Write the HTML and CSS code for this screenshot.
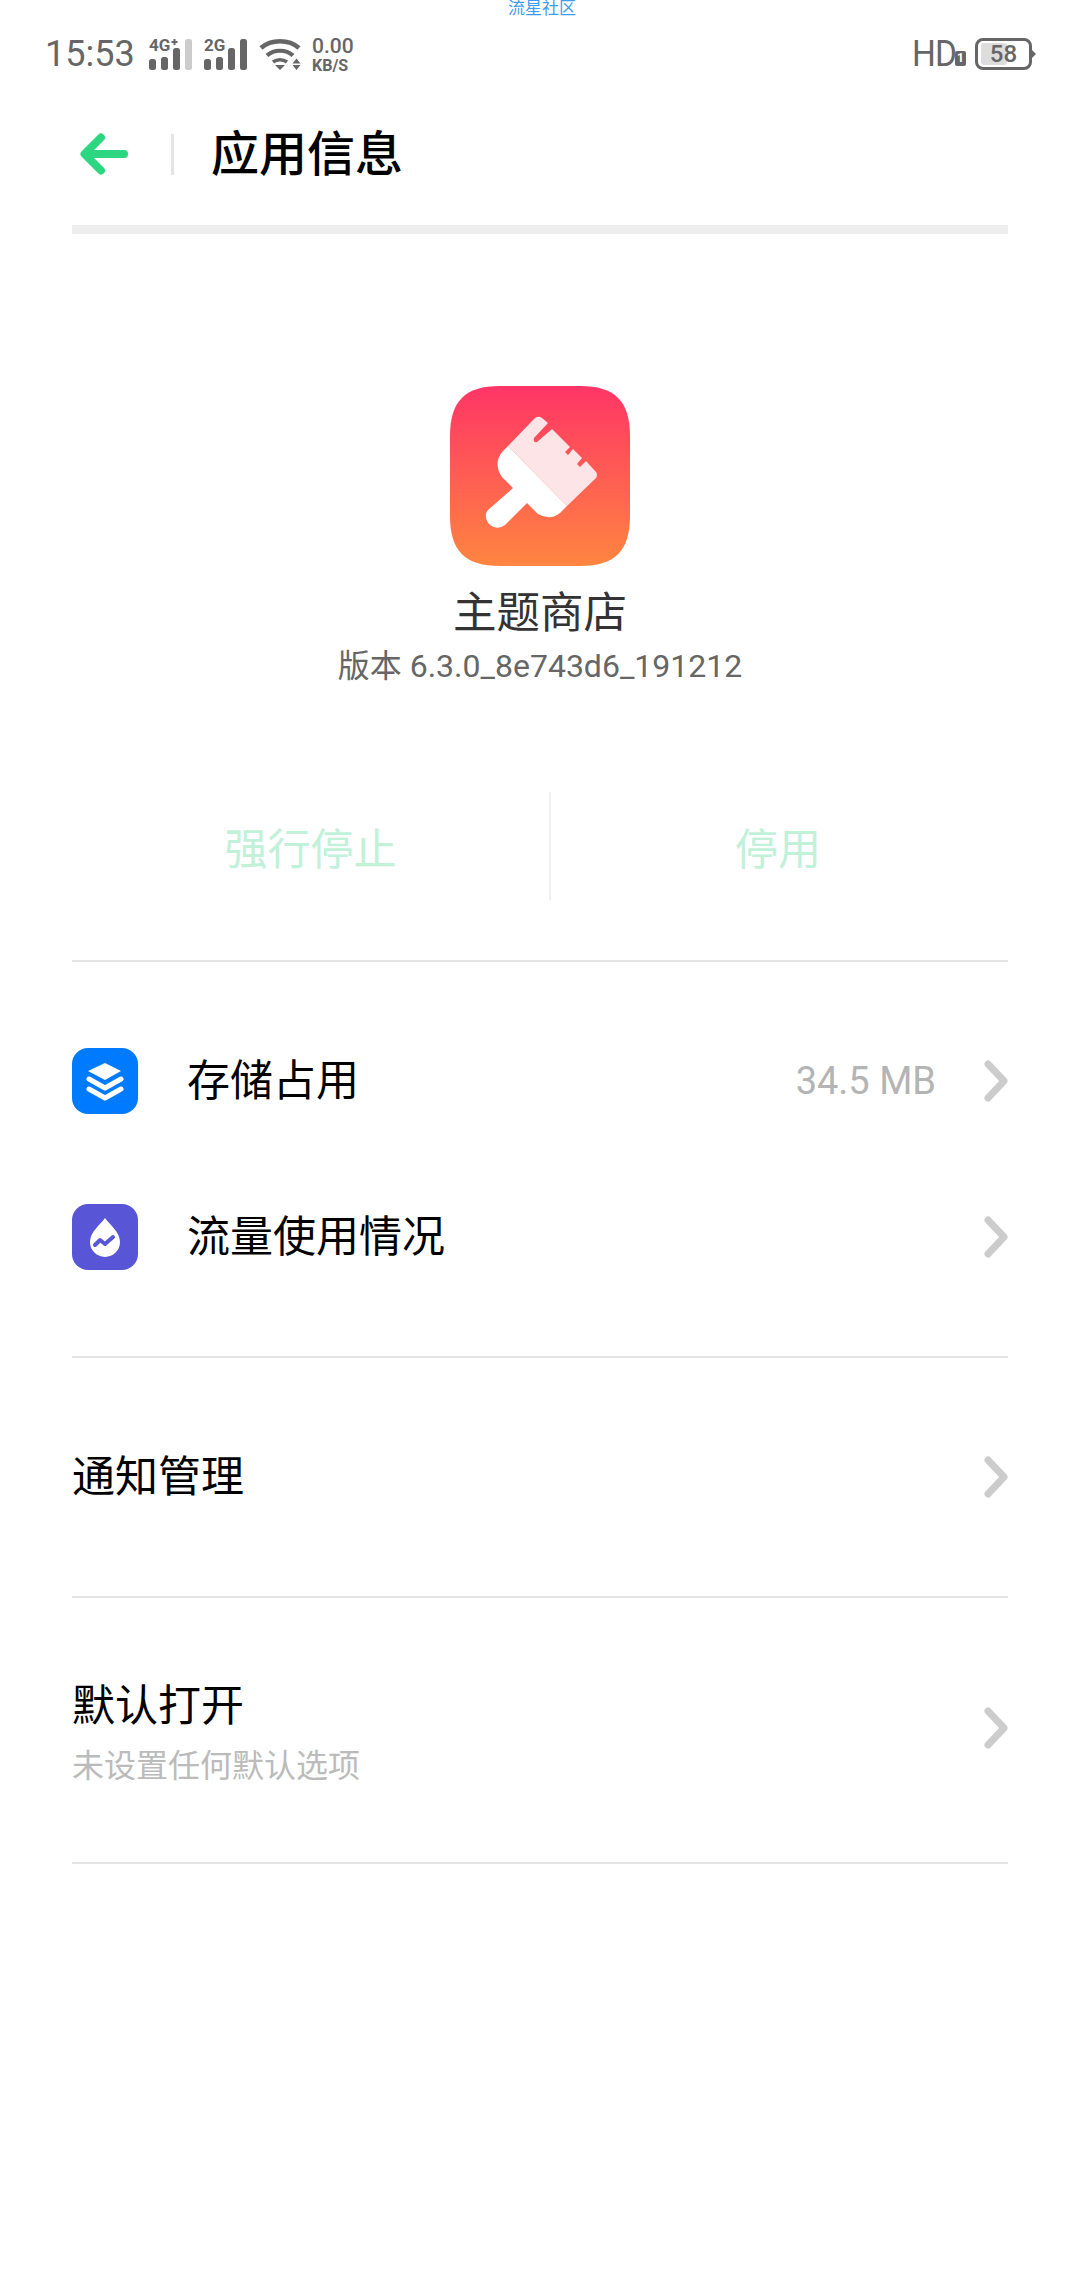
FILE: index.html
```html
<!DOCTYPE html>
<html lang="zh-CN">
<head>
  <meta charset="UTF-8">
  <title>应用信息</title>
  <link rel="stylesheet" href="styles.css">
</head>
<body>
  <div class="carrier-note">流星社区</div>

  <div class="status-bar">
    <span class="time">15:53</span>
    <svg class="signal" width="44" height="35" viewBox="0 -4 44 35" fill="#666">
      <text x="0" y="12" class="net-type">4G</text>
      <rect x="0" y="20" width="7" height="11" rx="2.500"/>
      <rect x="12" y="18" width="7" height="13" rx="2.500"/>
      <rect x="24" y="9" width="7" height="22" rx="2.500"/>
      <rect x="36" y="0" width="7" height="31" rx="2.500" fill="#ccc"/>
      <path d="M25.500 0v6M22.500 3h6" stroke="#666" stroke-width="2"/>
    </svg>
    <svg class="signal" width="44" height="35" viewBox="0 -4 44 35" fill="#666">
      <text x="0" y="12" class="net-type">2G</text>
      <rect x="0" y="20" width="7" height="11" rx="2.500"/>
      <rect x="12" y="18" width="7" height="13" rx="2.500"/>
      <rect x="24" y="9" width="7" height="22" rx="2.500"/>
      <rect x="36" y="0" width="7" height="31" rx="2.500"/>
    </svg>
    <svg class="wifi" width="42" height="33" viewBox="0 0 42 33" fill="none" stroke="#666">
      <path d="M2 10C12 1 30 1 40 10" stroke-width="4.500"/>
      <path d="M8 17.500C15 11 27 11 34 17.500" stroke-width="4"/>
      <path d="M14 24C18 21 24 21 28 24" stroke-width="3.500"/>
      <path d="M16 27h10l-5 5z" fill="#666" stroke="none"/>
      <path d="M37.500 20.500l4 5h-8zM33.500 27h8l-4 5z" fill="#666" stroke="none"/>
    </svg>
    <div class="speed">
      <span class="speed-num">0.00</span>
      <span class="speed-unit">KB/S</span>
    </div>
    <div class="status-right">
      <span class="hd-text">HD</span>
      <span class="hd-sim">1</span>
      <div class="battery">
        <div class="battery-fill"></div>
        <span class="battery-num">58</span>
      </div>
    </div>
  </div>

  <header class="app-bar">
    <svg class="back" width="48" height="42" viewBox="0 0 48 42" fill="none" stroke="#2dd680" stroke-width="8" stroke-linecap="round" stroke-linejoin="round">
      <path d="M44 21H5M21 4.500L4.500 21 21 37.500"/>
    </svg>
    <span class="app-bar-sep"></span>
    <h1 class="app-bar-title">应用信息</h1>
  </header>
  <div class="thick-rule"></div>

  <section class="app-head">
    <svg class="app-icon" width="180" height="180" viewBox="0 0 180 180">
      <defs>
        <linearGradient id="appGrad" x1="0" y1="0" x2="0" y2="1">
          <stop offset="0" stop-color="#ff3566"/>
          <stop offset="1" stop-color="#ff8540"/>
        </linearGradient>
      </defs>
      <path d="M50 0H130C165 0 180 15 180 50V130C180 165 165 180 130 180H50C15 180 0 165 0 130V50C0 15 15 0 50 0Z" fill="url(#appGrad)"/>
      <path d="M58 60L84 33Q88 29 92 32L98 37L84 52Q83 57 87 56L102 43L120 61L115 66L118 69L123 63L132 72L127 78L130 81L136 75L146 86Q148 89 146 92L117 120Z" fill="#fde4e6"/>
      <path d="M58 60L117 120L110 127Q100 135 88 128L77 117L55 139Q47 145 39 138Q33 130 38 124L63 102L52 91Q43 78 52 66Z" fill="#fff"/>
    </svg>
    <div class="app-name">主题商店</div>
    <div class="app-version">版本 6.3.0_8e743d6_191212</div>
  </section>

  <div class="actions">
    <span class="action">强行停止</span>
    <span class="action-sep"></span>
    <span class="action">停用</span>
  </div>

  <section class="group group-icons">
    <div class="row row-icon">
      <svg class="row-glyph" width="66" height="66" viewBox="0 0 66 66">
        <rect width="66" height="66" rx="16" fill="#007aff"/>
        <path d="M33 15L49 23L33 32L16 23Z" fill="#fff"/>
        <path d="M17 31L33 40L49 31M17 41L33 50L49 41" fill="none" stroke="#fff" stroke-width="5" stroke-linecap="round" stroke-linejoin="round"/>
      </svg>
      <span class="row-label">存储占用</span>
      <span class="row-value">34.5 MB</span>
      <svg class="chevron" width="24" height="42" viewBox="0 0 24 42" fill="none" stroke="#ccc" stroke-width="7" stroke-linecap="round" stroke-linejoin="round"><path d="M4 4l16 17L4 38"/></svg>
    </div>
    <div class="row row-icon">
      <svg class="row-glyph" width="66" height="66" viewBox="0 0 66 66">
        <rect width="66" height="66" rx="16" fill="#5856d6"/>
        <path d="M33 14C38 21 48 28 48 38A15 15 0 0 1 18 38C18 28 28 21 33 14Z" fill="#fff"/>
        <path d="M23 41L28 36L33 40L41 33" fill="none" stroke="#5856d6" stroke-width="4" stroke-linecap="round" stroke-linejoin="round"/>
      </svg>
      <span class="row-label">流量使用情况</span>
      <svg class="chevron" width="24" height="42" viewBox="0 0 24 42" fill="none" stroke="#ccc" stroke-width="7" stroke-linecap="round" stroke-linejoin="round"><path d="M4 4l16 17L4 38"/></svg>
    </div>
  </section>

  <section class="group group-plain">
    <div class="row">
      <span class="row-label">通知管理</span>
      <svg class="chevron" width="24" height="42" viewBox="0 0 24 42" fill="none" stroke="#ccc" stroke-width="7" stroke-linecap="round" stroke-linejoin="round"><path d="M4 4l16 17L4 38"/></svg>
    </div>
  </section>

  <section class="group group-sub">
    <div class="row">
      <div class="row-text">
        <span class="row-label">默认打开</span>
        <span class="row-sub">未设置任何默认选项</span>
      </div>
      <svg class="chevron" width="24" height="42" viewBox="0 0 24 42" fill="none" stroke="#ccc" stroke-width="7" stroke-linecap="round" stroke-linejoin="round"><path d="M4 4l16 17L4 38"/></svg>
    </div>
  </section>
</body>
</html>
```

FILE: styles.css
```css
* {
  box-sizing: border-box;
}
body {
  margin: 0;
  width: 1080px;
  height: 2280px;
  overflow: hidden;
  background: #fff;
  color: #000;
  font-family: Roboto, "Noto Sans CJK SC", sans-serif;
}

/* status bar */
.carrier-note {
  height: 16px;
  padding-left: 4px;
  font-size: 17px;
  line-height: 16px;
  text-align: center;
  color: #3f9cf0;
}
.status-bar {
  display: flex;
  align-items: center;
  height: 76px;
  padding: 0 45px;
  color: #666;
}
.time {
  font-size: 36px;
  width: 104px;
}
.signal {
  margin: -4px 11px 0 0;
}
.net-type {
  font: bold 17px Roboto, sans-serif;
}
.wifi {
  margin-right: 11px;
}
.speed {
  display: flex;
  flex-direction: column;
  gap: 1px;
  font-weight: 500;
  line-height: 1;
}
.speed-num {
  font-size: 21px;
  margin-top: 1px;
}
.speed-unit {
  font-size: 16px;
  font-weight: 700;
}
.status-right {
  margin-left: auto;
  margin-right: 3px;
  display: flex;
  align-items: center;
}
.hd-text {
  width: 42px;
  font-size: 36px;
  letter-spacing: -1px;
  transform: scaleX(.93);
  transform-origin: left center;
}
.hd-sim {
  width: 11px;
  height: 15px;
  margin: 8px 9px 0 1px;
  border-radius: 2px;
  background: #666;
  color: #fff;
  font-size: 12px;
  font-weight: 700;
  line-height: 15px;
  text-align: center;
}
.battery {
  position: relative;
  display: flex;
  align-items: center;
  justify-content: center;
  width: 57px;
  height: 32px;
  border: 3px solid #666;
  border-radius: 8px;
}
.battery::after {
  content: "";
  position: absolute;
  right: -7px;
  top: 9px;
  border-left: 4px solid #666;
  border-top: 4px solid transparent;
  border-bottom: 4px solid transparent;
}
.battery-fill {
  position: absolute;
  left: 3px;
  top: 2px;
  bottom: 2px;
  width: 26px;
  background: #ddd;
  border-radius: 3px;
}
.battery-num {
  position: relative;
  font-size: 24px;
  font-weight: 500;
}

/* title bar */
.app-bar {
  display: flex;
  align-items: center;
  height: 124px;
  padding-left: 80px;
}
.app-bar-sep {
  width: 3px;
  height: 41px;
  margin: 0 37px 0 43px;
  background: #e4e4e4;
}
.app-bar-title {
  margin: 0 0 8px;
  font-size: 48px;
  font-weight: 500;
}
.thick-rule {
  height: 9px;
  margin: 9px 72px 0;
  background: #eee;
}

/* app header */
.app-head {
  display: flex;
  flex-direction: column;
  align-items: center;
  padding-top: 152px;
}
.app-name {
  margin-top: 21px;
  font-size: 43.500px;
  line-height: 54px;
  color: #333;
}
.app-version {
  margin-top: 3px;
  font-size: 32px;
  line-height: 44px;
  color: #666;
}

.actions {
  display: grid;
  grid-template-columns: 477px 2px 1fr;
  align-items: center;
  height: 108px;
  margin: 104px 75px 0 72px;
}
.action {
  text-align: center;
  font-size: 43px;
  color: #c2f1da;
}
.action-sep {
  height: 108px;
  background: #f0f0f0;
}

/* list groups */
.group {
  margin: 0 72px;
  border-bottom: 2px solid #e4e4e4;
}
.group-icons {
  margin-top: 60px;
  padding: 86px 0 86px;
  border-top: 2px solid #e4e4e4;
}
.group-plain {
  padding: 86px 0 86px;
}
.group-sub {
  padding: 80px 0 71px;
}
.row {
  display: flex;
  align-items: center;
  min-height: 66px;
}
.row-icon {
  height: 66px;
}
.row-icon + .row-icon {
  margin-top: 90px;
}
.row-glyph {
  margin-right: 49px;
}
.row-label {
  font-size: 43px;
  line-height: 56px;
}
.row-value {
  margin-left: auto;
  margin-right: 48px;
  font-size: 38px;
  color: #b4b4b4;
}
.chevron {
  margin-left: auto;
  flex: none;
}
.row-value + .chevron {
  margin-left: 0;
}
.row-text {
  display: flex;
  flex-direction: column;
}
.row-sub {
  margin-top: 7px;
  font-size: 32px;
  line-height: 50px;
  color: #bbb;
}
.group-sub .chevron {
  margin-bottom: 14px;
}
```
